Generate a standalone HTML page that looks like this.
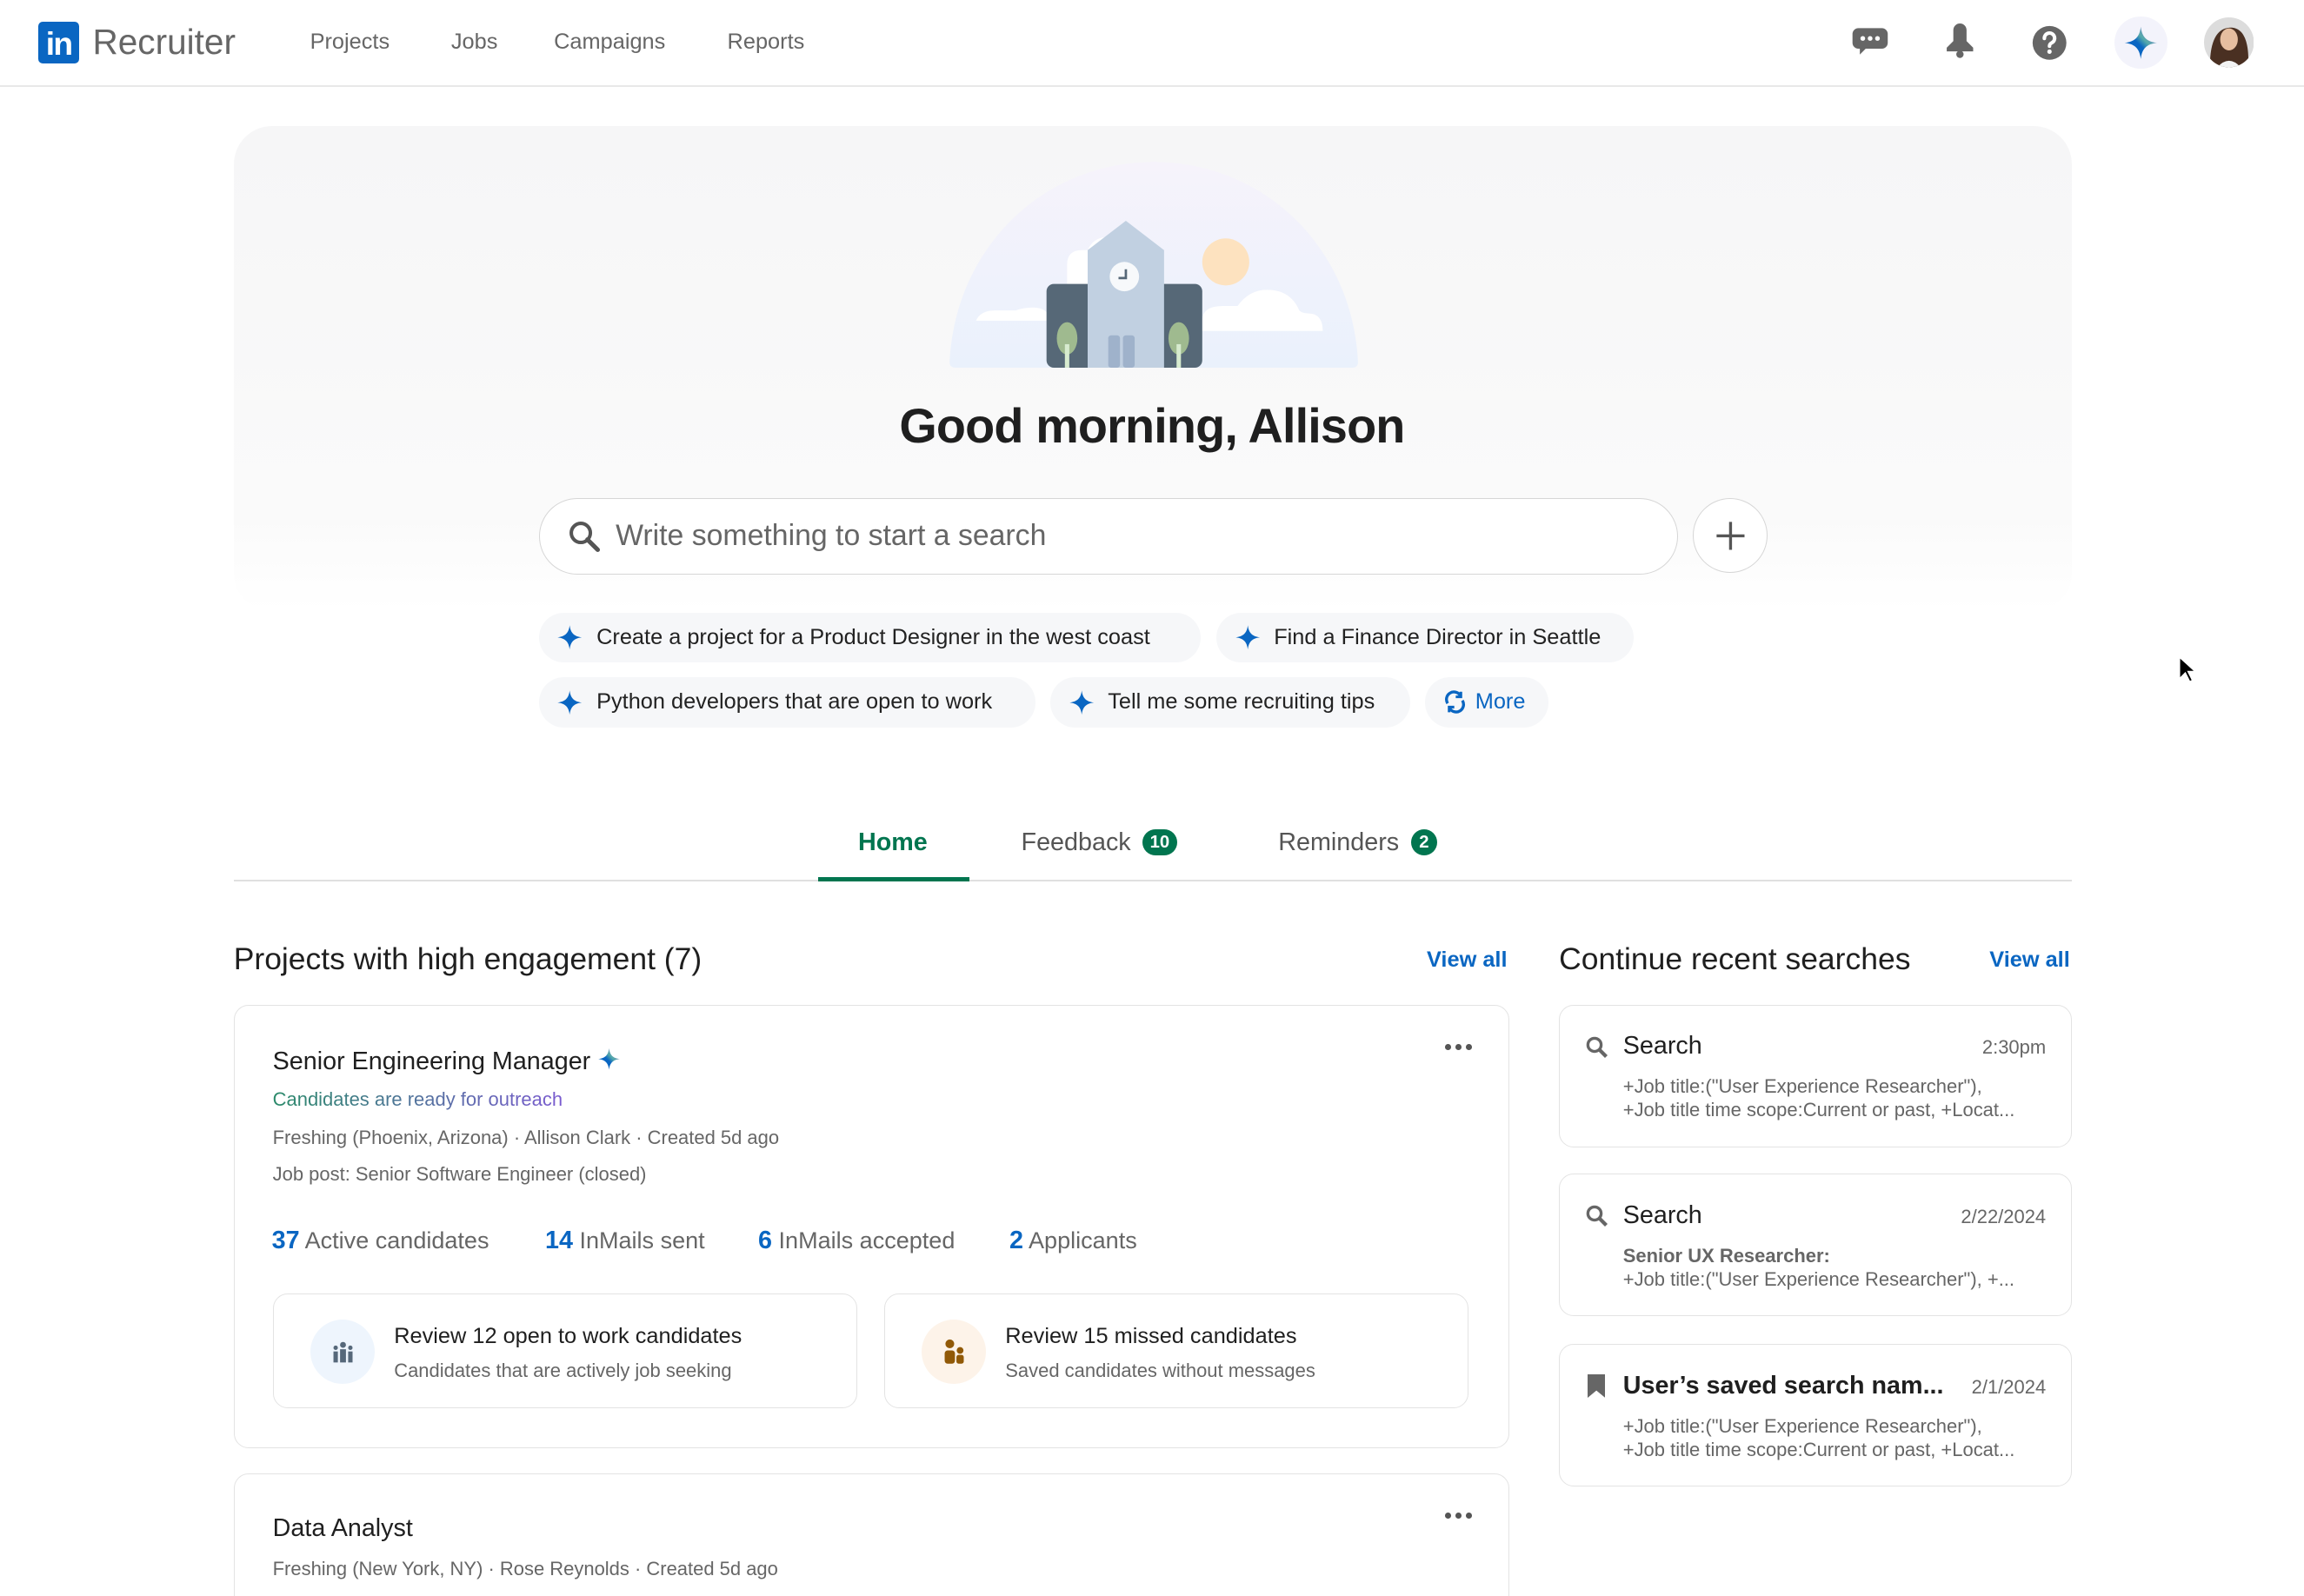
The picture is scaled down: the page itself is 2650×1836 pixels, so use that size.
<!DOCTYPE html>
<html><head><meta charset="utf-8"><style>
*{margin:0;padding:0;box-sizing:border-box}
html,body{width:2650px;height:1836px;overflow:hidden;background:#fff}
#w{zoom:1.69;width:1568px;height:1087px;position:relative;font-family:"Liberation Sans",sans-serif;color:#1f1f1f}
.a{position:absolute;white-space:nowrap}
.nav{font-size:15px;color:#666;top:20px}
.chip{position:absolute;height:34px;background:#f6f7f9;border-radius:17px;font-size:15px;color:#222;display:flex;align-items:center;padding-left:12px}
.chip svg{margin-right:9px}
.card{position:absolute;border:1px solid #e3e3e3;border-radius:10px;background:#fff}
.badge{display:inline-block;background:#01754f;color:#fff;font-size:12px;font-weight:bold;border-radius:10px;height:18px;line-height:18px;min-width:18px;padding:0 5px;text-align:center;vertical-align:2px;margin-left:8px}
.meta{font-size:13px;color:#666}
.stat{font-size:16px;color:#666;top:835px}
.stat b{color:#0a66c2;font-weight:bold;font-size:17px}
.rs-t{font-size:17px;color:#1f1f1f;position:absolute;left:43px;top:18px}
.rs-d{font-size:13px;color:#666;position:absolute;right:17px;top:21px}
.rs-b{font-size:13px;color:#666;position:absolute;left:43px;top:47px;line-height:16px}
.dots{position:absolute;left:824px;top:26px;display:flex;gap:3px}
.dots i{width:4px;height:4px;border-radius:50%;background:#555;display:block}
</style></head><body><div id="w">
<div class="a" style="left:0;top:58px;width:1568px;height:1px;background:#e8e8e8"></div>
<div class="a" style="left:26px;top:15px;width:28px;height:28px;background:#0a66c2;border-radius:3px;color:#fff;font-weight:bold;font-size:22px;line-height:30px;text-align:center;letter-spacing:-1px">in</div>
<div class="a" style="left:63px;top:15px;font-size:24px;color:#666">Recruiter</div>
<div class="a nav" style="left:211px">Projects</div>
<div class="a nav" style="left:307px">Jobs</div>
<div class="a nav" style="left:377px">Campaigns</div>
<div class="a nav" style="left:495px">Reports</div>
<svg class="a" style="left:1260px;top:17px" width="26" height="24" viewBox="0 0 26 24"><path d="M5 2h16a4 4 0 0 1 4 4v6a4 4 0 0 1-4 4H10l-4 4v-4H5a4 4 0 0 1-4-4V6a4 4 0 0 1 4-4z" fill="#666"/><circle cx="8" cy="9" r="1.6" fill="#fff"/><circle cx="13" cy="9" r="1.6" fill="#fff"/><circle cx="18" cy="9" r="1.6" fill="#fff"/></svg>
<svg class="a" style="left:1322px;top:16px" width="24" height="26" viewBox="0 0 24 26"><path d="M7.5 4.5a4.5 4.5 0 0 1 9 0V12l4.5 4.5V19H3v-2.5L7.5 12z" fill="#666"/><circle cx="12" cy="21" r="2.5" fill="#666"/></svg>
<svg class="a" style="left:1383px;top:17px" width="24" height="24" viewBox="0 0 24 24"><circle cx="12" cy="12" r="11.5" fill="#666"/><path d="M8.5 9a3.5 3.5 0 1 1 5 3c-1.2.6-1.5 1.2-1.5 2.3" stroke="#fff" stroke-width="2.4" fill="none" stroke-linecap="round"/><circle cx="12" cy="18" r="1.5" fill="#fff"/></svg>
<div class="a" style="left:1439px;top:11px;width:36px;height:36px;border-radius:50%;background:#f3f3fb"></div>
<svg class="a" style="left:1445px;top:17px" width="24" height="24" viewBox="0 0 24 24"><defs><linearGradient id="g" x1="0" y1="1" x2="1" y2="0"><stop offset="0.45" stop-color="#0a66c2"/><stop offset="0.6" stop-color="#5aa"/><stop offset="1" stop-color="#8b6cd8"/></linearGradient></defs><path d="M12 1C12.8 8 16 11.2 23 12 16 12.8 12.8 16 12 23 11.2 16 8 12.8 1 12 8 11.2 11.2 8 12 1z" fill="url(#g)"/></svg>
<svg class="a" style="left:1500px;top:12px" width="34" height="34" viewBox="0 0 34 34"><clipPath id="c"><circle cx="17" cy="17" r="17"/></clipPath><g clip-path="url(#c)"><rect width="34" height="34" fill="#dcdcdc"/><path d="M4 34c0-12 2-26 13-27s14 12 13 27z" fill="#4a3022"/><ellipse cx="17" cy="15" rx="6" ry="7.5" fill="#e6bea0"/><path d="M9 34q8-9 16 0z" fill="#f3f3f3"/></g></svg>
<div class="a" style="left:159px;top:86px;width:1251px;height:330px;border-radius:26px;background:linear-gradient(#f6f6f7,#fafafa 80%,#fff)"></div>
<svg class="a" style="left:640px;top:108px" width="290" height="145" viewBox="0 0 290 145">
<defs><linearGradient id="d" x1="0" y1="0" x2="0" y2="1"><stop offset="0" stop-color="#f6f3fb"/><stop offset="1" stop-color="#eaf1fc"/></linearGradient></defs>
<path d="M6 138C10 60 70 2 145 2S280 60 284 138Q284 142 280 142H10Q6 142 6 138z" fill="url(#d)"/>
<path d="M24 110q3-7 13-7h14q5-2 12-2 10 0 12 9z" fill="#fff"/>
<circle cx="194" cy="70" r="16" fill="#fde2bf"/>
<path d="M178 110q0-10 14-10h10q8-11 20-11 16 0 22 14 2 2 6 2 10 0 10 12H178z" fill="#fff"/>
<path d="M86 72q0-10 10-10h4q4-9 14-9 12 0 14 9h6v28H86z" fill="#fff"/>
<rect x="72" y="85" width="106" height="57" rx="5" fill="#566877"/>
<path d="M100 142V62l26-20 26 20v80z" fill="#c1d0e1"/>
<circle cx="125" cy="80" r="10" fill="#f7f9fb"/><path d="M126 75v6h-5" stroke="#566877" stroke-width="1.6" fill="none"/>
<rect x="114" y="120" width="8" height="22" rx="2" fill="#9fb2cb"/><rect x="124" y="120" width="8" height="22" rx="2" fill="#9fb2cb"/>
<ellipse cx="86" cy="122" rx="7" ry="11" fill="#9fba8f"/><rect x="84.5" y="126" width="3" height="16" fill="#d7ebcf"/>
<ellipse cx="162" cy="122" rx="7" ry="11" fill="#9fba8f"/><rect x="160.5" y="126" width="3" height="16" fill="#d7ebcf"/>
</svg>
<div class="a" style="left:0;width:1568px;text-align:center;top:271px;font-size:33px;font-weight:bold;color:#1f1f1f;letter-spacing:-0.5px">Good morning, Allison</div>
<div class="a" style="left:367px;top:339px;width:775px;height:52px;border:1px solid #d6d6d6;border-radius:26px;background:#fff"></div>
<svg class="a" style="left:386px;top:353px" width="24" height="24" viewBox="0 0 24 24"><circle cx="9.5" cy="9.5" r="6.5" stroke="#555" stroke-width="2.4" fill="none"/><path d="M14 14l7 7" stroke="#555" stroke-width="3" stroke-linecap="round"/></svg>
<div class="a" style="left:419px;top:353px;font-size:20px;color:#666">Write something to start a search</div>
<div class="a" style="left:1152px;top:339px;width:51px;height:51px;border:1px solid #d6d6d6;border-radius:50%;background:#fff"></div>
<svg class="a" style="left:1166px;top:353px" width="23" height="23"><path d="M11.5 2v19M2 11.5h19" stroke="#555" stroke-width="2"/></svg>
<div class="chip" style="left:367px;top:417px;width:450px"><svg width="18" height="18" viewBox="0 0 24 24"><path d="M12 1C12.8 8 16 11.2 23 12 16 12.8 12.8 16 12 23 11.2 16 8 12.8 1 12 8 11.2 11.2 8 12 1z" fill="#0a66c2"/></svg>Create a project for a Product Designer in the west coast</div>
<div class="chip" style="left:828px;top:417px;width:284px"><svg width="18" height="18" viewBox="0 0 24 24"><path d="M12 1C12.8 8 16 11.2 23 12 16 12.8 12.8 16 12 23 11.2 16 8 12.8 1 12 8 11.2 11.2 8 12 1z" fill="#0a66c2"/></svg>Find a Finance Director in Seattle</div>
<div class="chip" style="left:367px;top:461px;width:338px"><svg width="18" height="18" viewBox="0 0 24 24"><path d="M12 1C12.8 8 16 11.2 23 12 16 12.8 12.8 16 12 23 11.2 16 8 12.8 1 12 8 11.2 11.2 8 12 1z" fill="#0a66c2"/></svg>Python developers that are open to work</div>
<div class="chip" style="left:715px;top:461px;width:245px"><svg width="18" height="18" viewBox="0 0 24 24"><path d="M12 1C12.8 8 16 11.2 23 12 16 12.8 12.8 16 12 23 11.2 16 8 12.8 1 12 8 11.2 11.2 8 12 1z" fill="#0a66c2"/></svg>Tell me some recruiting tips</div>
<div class="chip" style="left:970px;top:461px;width:84px;color:#0a66c2"><svg width="16" height="16" viewBox="0 0 16 16" style="margin-right:6px"><path d="M3 9a5 5 0 0 1 8.5-5.5M13 7a5 5 0 0 1-8.5 5.5" stroke="#0a66c2" stroke-width="2" fill="none"/><path d="M12 1v3.5H8.5M4 15v-3.5h3.5" stroke="#0a66c2" stroke-width="1.8" fill="none"/></svg>More</div>
<div class="a" style="left:159px;top:599px;width:1251px;height:1px;background:#e0e0e0"></div>
<div class="a" style="left:584px;top:564px;font-size:17px;font-weight:bold;color:#01754f">Home</div>
<div class="a" style="left:557px;top:597px;width:103px;height:3px;background:#01754f"></div>
<div class="a" style="left:695px;top:564px;font-size:17px;color:#555">Feedback<span class="badge">10</span></div>
<div class="a" style="left:870px;top:564px;font-size:17px;color:#555">Reminders<span class="badge">2</span></div>
<div class="a" style="left:159px;top:641px;font-size:21px;color:#1f1f1f">Projects with high engagement (7)</div>
<div class="a" style="left:971px;top:645px;font-size:15px;font-weight:bold;color:#0a66c2">View all</div>
<div class="card" style="left:159px;top:684px;width:868px;height:302px">
 <div class="a" style="left:26px;top:27px;font-size:17px">Senior Engineering Manager <svg width="16" height="18" viewBox="0 0 24 24" style="vertical-align:-2px"><path d="M12 1C12.8 8 16 11.2 23 12 16 12.8 12.8 16 12 23 11.2 16 8 12.8 1 12 8 11.2 11.2 8 12 1z" fill="url(#g)"/></svg></div>
 <div class="a" style="left:26px;top:56px;font-size:13px;background:linear-gradient(90deg,#2b8a6a,#7a5bd0);-webkit-background-clip:text;color:transparent">Candidates are ready for outreach</div>
 <div class="a meta" style="left:26px;top:82px">Freshing (Phoenix, Arizona) · Allison Clark · Created 5d ago</div>
 <div class="a meta" style="left:26px;top:107px">Job post: Senior Software Engineer (closed)</div>
 <div class="dots"><i></i><i></i><i></i></div>
 <div class="card" style="left:26px;top:196px;width:398px;height:78px">
  <div class="a" style="left:25px;top:17px;width:44px;height:44px;border-radius:50%;background:#eef5fd"></div>
  <svg class="a" style="left:39px;top:31px" width="16" height="16" viewBox="0 0 16 16" fill="#56687a"><circle cx="8" cy="3" r="2"/><rect x="6" y="6" width="4" height="9"/><circle cx="3" cy="5" r="1.5"/><rect x="1.5" y="7.5" width="3" height="7.5"/><circle cx="13" cy="5" r="1.5"/><rect x="11.5" y="7.5" width="3" height="7.5"/></svg>
  <div class="a" style="left:82px;top:20px;font-size:15px">Review 12 open to work candidates</div>
  <div class="a meta" style="left:82px;top:44px">Candidates that are actively job seeking</div>
 </div>
 <div class="card" style="left:442px;top:196px;width:398px;height:78px">
  <div class="a" style="left:25px;top:17px;width:44px;height:44px;border-radius:50%;background:#fdf3e9"></div>
  <svg class="a" style="left:39px;top:30px" width="16" height="18" viewBox="0 0 16 18" fill="#915907"><circle cx="5" cy="3.5" r="3"/><rect x="1.5" y="8" width="7" height="9" rx="2"/><circle cx="12" cy="8" r="2.3"/><rect x="9.5" y="11" width="5" height="6" rx="1.5"/></svg>
  <div class="a" style="left:82px;top:20px;font-size:15px">Review 15 missed candidates</div>
  <div class="a meta" style="left:82px;top:44px">Saved candidates without messages</div>
 </div>
</div>
<div class="a stat" style="left:185px"><b>37</b> Active candidates</div>
<div class="a stat" style="left:371px"><b>14</b> InMails sent</div>
<div class="a stat" style="left:516px"><b>6</b> InMails accepted</div>
<div class="a stat" style="left:687px"><b>2</b> Applicants</div>
<div class="card" style="left:159px;top:1003px;width:868px;height:120px">
 <div class="a" style="left:26px;top:27px;font-size:17px">Data Analyst</div>
 <div class="a meta" style="left:26px;top:57px">Freshing (New York, NY) · Rose Reynolds · Created 5d ago</div>
 <div class="dots"><i></i><i></i><i></i></div>
</div>
<div class="a" style="left:1061px;top:641px;font-size:21px">Continue recent searches</div>
<div class="a" style="left:1354px;top:645px;font-size:15px;font-weight:bold;color:#0a66c2">View all</div>
<div class="card" style="left:1061px;top:684px;width:349px;height:97px">
 <svg class="a" style="left:17px;top:20px" width="16" height="16" viewBox="0 0 16 16"><circle cx="6.5" cy="6.5" r="4.5" stroke="#666" stroke-width="2" fill="none"/><path d="M10 10l4.5 4.5" stroke="#666" stroke-width="2.5"/></svg>
 <div class="rs-t">Search</div><div class="rs-d">2:30pm</div>
 <div class="rs-b">+Job title:("User Experience Researcher"),<br>+Job title time scope:Current or past, +Locat...</div>
</div>
<div class="card" style="left:1061px;top:799px;width:349px;height:97px">
 <svg class="a" style="left:17px;top:20px" width="16" height="16" viewBox="0 0 16 16"><circle cx="6.5" cy="6.5" r="4.5" stroke="#666" stroke-width="2" fill="none"/><path d="M10 10l4.5 4.5" stroke="#666" stroke-width="2.5"/></svg>
 <div class="rs-t">Search</div><div class="rs-d">2/22/2024</div>
 <div class="rs-b"><b>Senior UX Researcher:</b><br>+Job title:("User Experience Researcher"), +...</div>
</div>
<div class="card" style="left:1061px;top:915px;width:349px;height:97px">
 <svg class="a" style="left:19px;top:20px" width="12" height="16" viewBox="0 0 12 16"><path d="M0 0h12v16L6 11 0 16z" fill="#666"/></svg>
 <div class="rs-t" style="font-weight:bold">User’s saved search nam...</div><div class="rs-d">2/1/2024</div>
 <div class="rs-b">+Job title:("User Experience Researcher"),<br>+Job title time scope:Current or past, +Locat...</div>
</div>
<svg class="a" style="left:1482px;top:446px" width="14" height="20" viewBox="0 0 14 20"><path d="M1 1v15l4-4 3 6 2-1-3-6h5z" fill="#000" stroke="#fff" stroke-width="1"/></svg>
</div></body></html>
